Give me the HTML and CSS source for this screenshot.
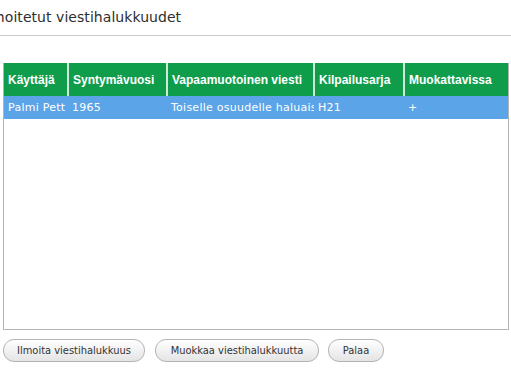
FILE: index.html
```html
<!DOCTYPE html>
<html lang="fi">
<head>
<meta charset="utf-8">
<title>Ilmoitetut viestihalukkuudet</title>
<link rel="stylesheet" href="styles.css">
</head>
<body>
<div class="page">
  <div class="heading"><h1 class="title">Ilmoitetut viestihalukkuudet</h1></div>
  <div class="grid">
    <table class="tbl">
      <colgroup>
        <col class="c1"><col class="c2"><col class="c3"><col class="c4"><col class="c5">
      </colgroup>
      <thead>
        <tr>
          <th>Käyttäjä</th>
          <th>Syntymävuosi</th>
          <th>Vapaamuotoinen viesti</th>
          <th>Kilpailusarja</th>
          <th class="last">Muokattavissa</th>
        </tr>
      </thead>
      <tbody>
        <tr class="sel">
          <td>Palmi Pett</td>
          <td>1965</td>
          <td>Toiselle osuudelle haluais</td>
          <td>H21</td>
          <td>+</td>
        </tr>
      </tbody>
    </table>
  </div>
  <div class="actions">
    <button class="btn b1">Ilmoita viestihalukkuus</button>
    <button class="btn b2">Muokkaa viestihalukkuutta</button>
    <button class="btn b3">Palaa</button>
  </div>
</div>
</body>
</html>
```
FILE: styles.css
```css
html, body {
  margin: 0;
  padding: 0;
  background: #ffffff;
  overflow: hidden;
}
.page {
  width: 511px;
  height: 383px;
  font-family: "DejaVu Sans", Verdana, sans-serif;
  color: #333;
}
.heading {
  height: 35px;
  border-bottom: 1px solid #c9c9c9;
  overflow: hidden;
}
.title {
  margin: 0 0 0 -17px;
  padding-top: 9px;
  font-size: 14px;
  font-weight: normal;
  color: #2e2e2e;
  white-space: nowrap;
  letter-spacing: 0.05px;
}
.grid {
  margin: 27px 0 0 3px;
  width: 504px;
  height: 266px;
  border: 1px solid #b4b4b4;
  border-top: none;
}
.tbl {
  width: 504px;
  border-collapse: collapse;
  table-layout: fixed;
}
.c1 { width: 64px; }
.c2 { width: 99px; }
.c3 { width: 147px; }
.c4 { width: 90px; }
.c5 { width: 104px; }
.tbl th {
  height: 33px;
  padding: 0 0 0 4px;
  background: #0f9d4c;
  color: #ffffff;
  font-family: "Liberation Sans", Arial, sans-serif;
  font-weight: bold;
  font-size: 12px;
  text-align: left;
  border-right: 2px solid #cfe9d7;
  white-space: nowrap;
  overflow: hidden;
}
.tbl th.last { border-right: none; }
.tbl td {
  height: 23px;
  padding: 0 2px 0 4px;
  font-size: 11px;
  letter-spacing: 0.25px;
  color: #ffffff;
  white-space: nowrap;
  overflow: hidden;
}
.sel td {
  background: #5ba4e7;
}
.actions {
  display: flex;
  margin: 9px 0 0 3px;
}
.btn {
  height: 23px;
  padding: 0;
  border: 1px solid #b3b3b3;
  border-radius: 11px;
  background: linear-gradient(#ffffff, #e4e4e4);
  font-family: "DejaVu Sans Condensed", "DejaVu Sans", sans-serif;
  font-size: 11px;
  color: #333;
}
.b1 { width: 142px; }
.b2 { width: 164px; margin-left: 10px; }
.b3 { width: 56px; margin-left: 9px; }
```
